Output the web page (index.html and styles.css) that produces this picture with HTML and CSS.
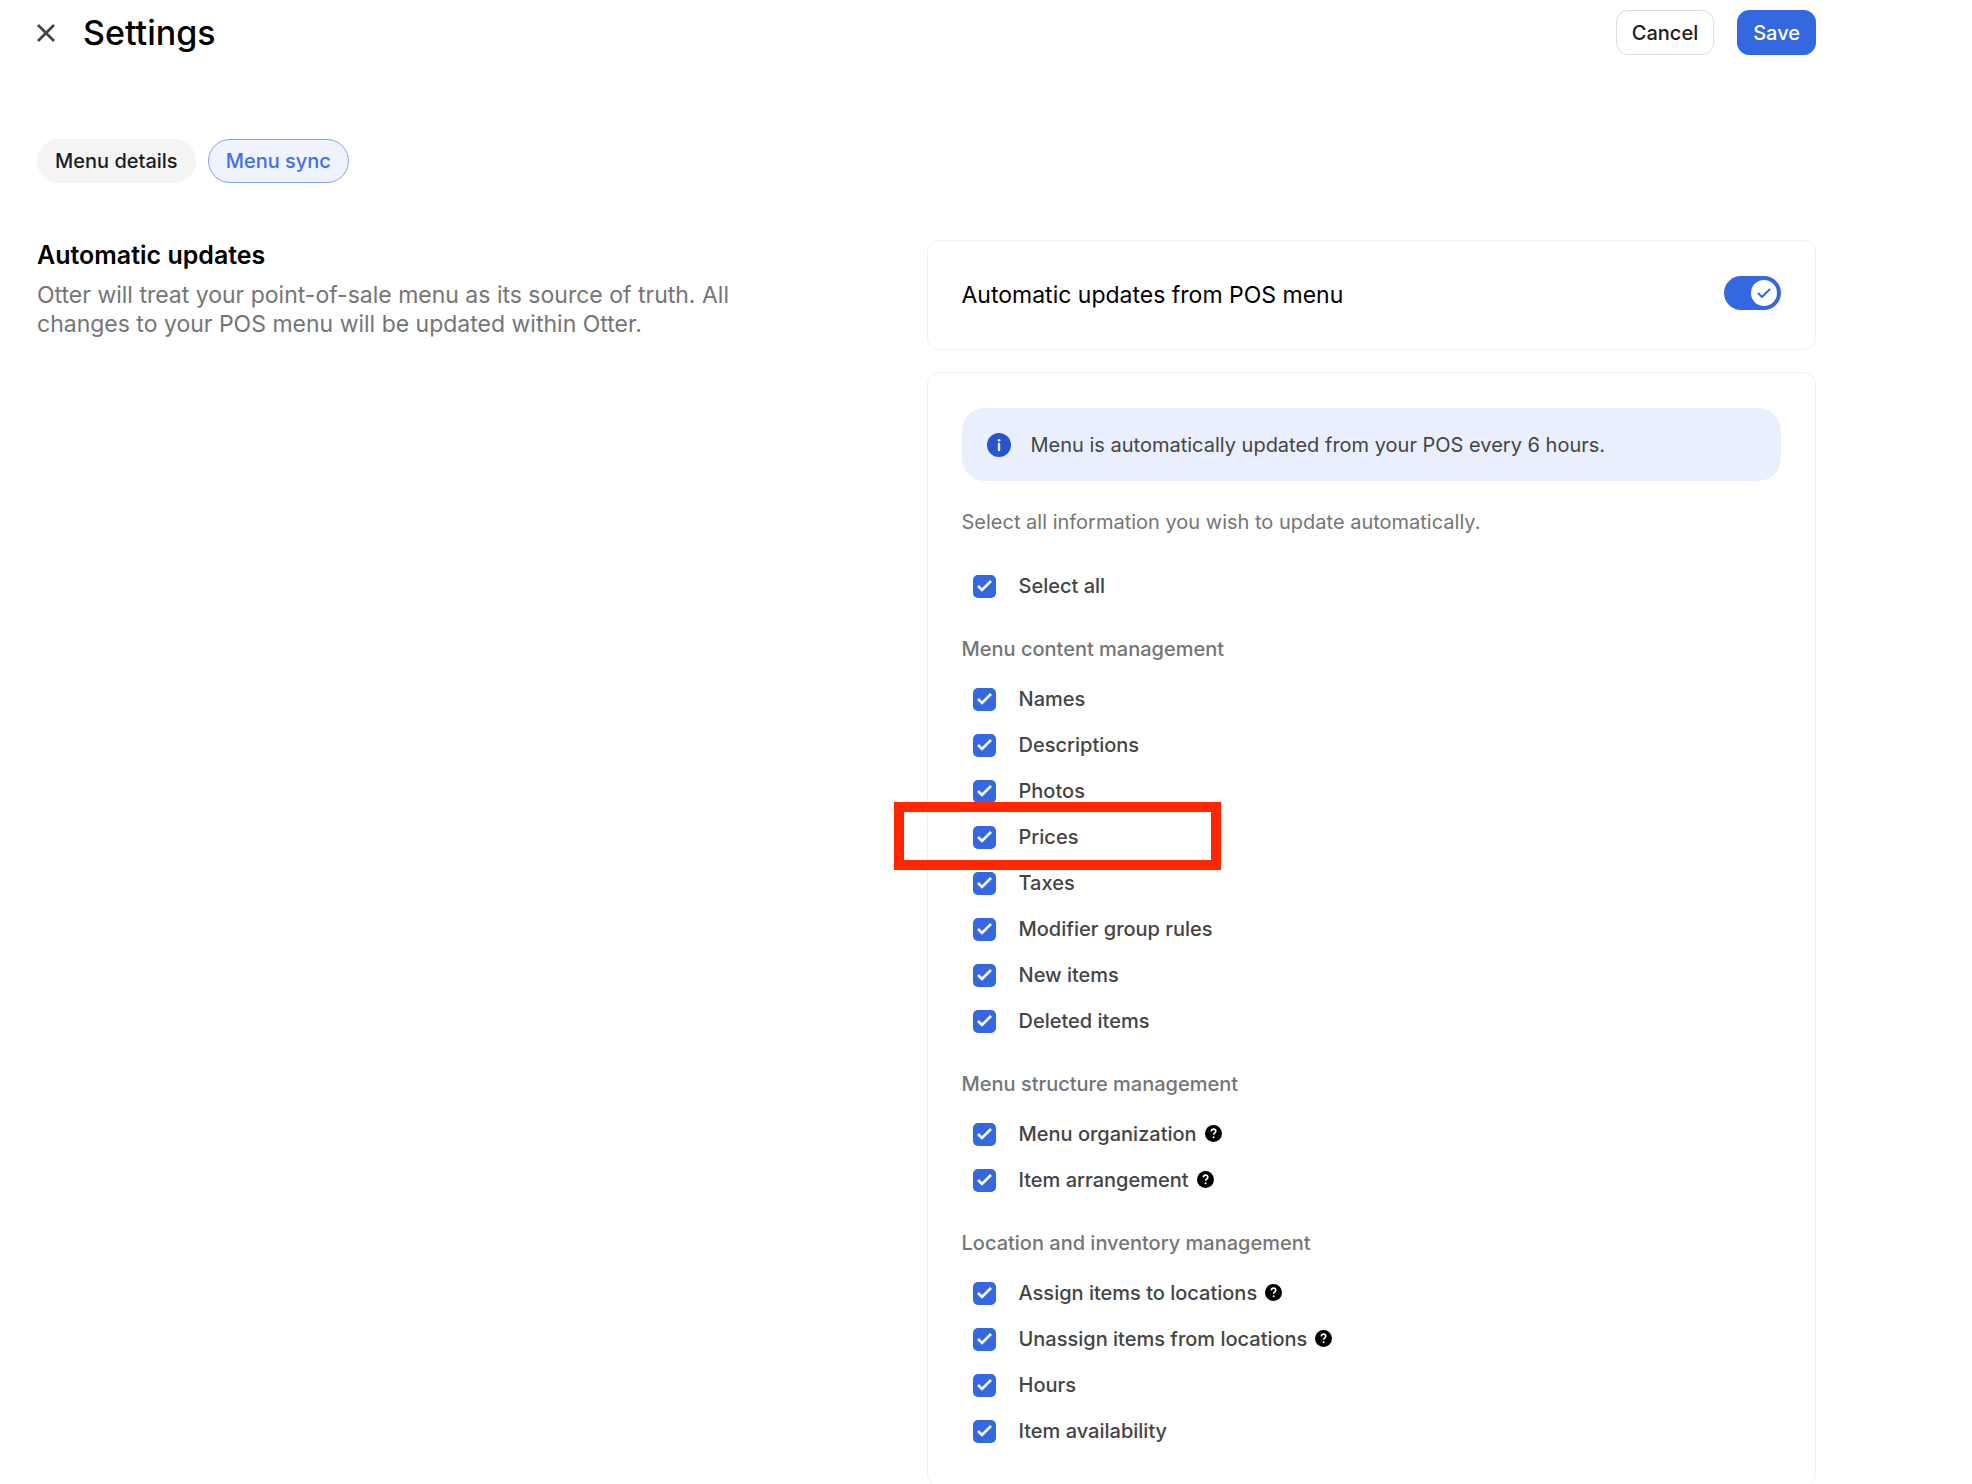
FILE: index.html
```html
<!DOCTYPE html>
<html lang="en">
  <head>
    <meta charset="utf-8" />
    <title>Settings</title>
    <meta name="viewport" content="width=device-width, initial-scale=1" />
    <link rel="stylesheet" href="styles.css">
  </head>

  <body>
    <svg class="symbols" aria-hidden="true">
      <symbol id="help" viewBox="0 0 17 17">
        <circle cx="8.5" cy="8.5" r="8.5" />
        <path d="M6.2 6.3C6.4 4.8 7.300 4.100 8.500 4.100s2.300.7 2.300 2.100c0 1.600-2.200 1.700-2.200 3.500" fill="none" stroke="#fff" stroke-width="1.6" />
        <circle cx="8.6" cy="12.2" r="1" fill="#fff" />
      </symbol>
    </svg>

    <header class="topbar">
      <button type="button" class="close-btn" aria-label="Close">
        <svg width="18" height="18" viewBox="0 0 18 18">
          <path d="M1 1l16 16M17 1L1 17" stroke="#444" stroke-width="2.8" />
        </svg>
      </button>
      <h1>Settings</h1>
      <div class="actions">
        <button type="button" class="btn">Cancel</button>
        <button type="submit" class="btn btn-primary" form="sync-form">Save</button>
      </div>
    </header>

    <nav class="tabs">
      <a href="#details" class="tab">Menu details</a>
      <a href="#sync" class="tab tab-active" aria-current="page">Menu sync</a>
    </nav>

    <main class="content">
      <section class="intro">
        <h2>Automatic updates</h2>
        <p>Otter will treat your point-of-sale menu as its source of truth. All changes to your POS menu will be updated within Otter.</p>
      </section>

      <form id="sync-form" class="panels">
        <div class="card toggle-card">
          <label for="auto-updates">Automatic updates from POS menu</label>
          <span class="switch">
            <input type="checkbox" role="switch" id="auto-updates" checked />
            <span class="knob">
              <svg width="14" height="10" viewBox="0 0 14 10">
                <path d="M1 5l4 4 8-8" fill="none" stroke="#3568e0" stroke-width="2" />
              </svg>
            </span>
          </span>
        </div>

        <div class="card">
          <div class="banner">
            <svg width="24" height="24" viewBox="0 0 24 24">
              <circle cx="12" cy="12" r="12" fill="#2855cc" />
              <circle cx="12" cy="7.3" r="1.4" fill="#e9effc" />
              <path d="M12 11v6" stroke="#e9effc" stroke-width="2.4" stroke-linecap="round" />
            </svg>
            <p>Menu is automatically updated from your POS every 6 hours.</p>
          </div>

          <p class="hint">Select all information you wish to update automatically.</p>

          <label class="row"><input type="checkbox" checked />Select all</label>

          <h3>Menu content management</h3>
          <label class="row"><input type="checkbox" checked />Names</label>
          <label class="row"><input type="checkbox" checked />Descriptions</label>
          <label class="row"><input type="checkbox" checked />Photos</label>
          <label class="row highlight"><input type="checkbox" checked />Prices</label>
          <label class="row"><input type="checkbox" checked />Taxes</label>
          <label class="row"><input type="checkbox" checked />Modifier group rules</label>
          <label class="row"><input type="checkbox" checked />New items</label>
          <label class="row"><input type="checkbox" checked />Deleted items</label>

          <h3>Menu structure management</h3>
          <label class="row"><input type="checkbox" checked />Menu organization <svg class="help"><use href="#help" /></svg></label>
          <label class="row"><input type="checkbox" checked />Item arrangement <svg class="help"><use href="#help" /></svg></label>

          <h3>Location and inventory management</h3>
          <label class="row"><input type="checkbox" checked />Assign items to locations <svg class="help"><use href="#help" /></svg></label>
          <label class="row"><input type="checkbox" checked />Unassign items from locations <svg class="help"><use href="#help" /></svg></label>
          <label class="row"><input type="checkbox" checked />Hours</label>
          <label class="row"><input type="checkbox" checked />Item availability</label>
        </div>
      </form>
    </main>
  </body>
</html>
```

FILE: styles.css
```css
* {
  margin: 0;
  padding: 0;
  box-sizing: border-box;
}

body {
  font-family: Inter, sans-serif;
  font-size: 20px;
  line-height: 28px;
  color: #000;
  background-color: #fff;
  padding: 10px 156px 0 37px;
}

button {
  font: inherit;
  cursor: pointer;
}

.symbols {
  display: none;
}

.topbar {
  display: flex;
  align-items: center;
  height: 45px;
}

.close-btn {
  display: flex;
  border: none;
  background: none;
}

h1 {
  margin-left: 28px;
  font-size: 34px;
  font-weight: 500;
  line-height: 45px;
}

.actions {
  display: flex;
  gap: 23px;
  margin-left: auto;
}

.btn {
  height: 45px;
  padding: 0 15px;
  border: 1px solid #dedede;
  border-radius: 12px;
  background-color: #fff;
  color: #1c1c1c;
  font-weight: 500;
}

.btn-primary {
  border-color: #3568e0;
  background-color: #3568e0;
  color: #fff;
}

.tabs {
  display: flex;
  gap: 12px;
  margin-top: 84px;
}

.tab {
  padding: 7px 17px;
  border: 1px solid #f4f4f4;
  border-radius: 22px;
  background-color: #f4f4f4;
  color: #1c1c1c;
  font-weight: 500;
  text-decoration: none;
}

.tab-active {
  border-color: #86a7ee;
  background-color: #eef3fe;
  color: #3f70e6;
}

.content {
  display: grid;
  grid-template-columns: 1fr 1fr;
  margin-top: 57px;
}

.intro {
  padding-right: 160px;
}

.intro h2 {
  font-size: 25px;
  font-weight: 600;
  line-height: 30px;
}

.intro p {
  margin-top: 11px;
  font-size: 23px;
  line-height: 29px;
  color: #757575;
}

.card {
  padding: 35px 34px 31px;
  border: 1px solid #f0f0f0;
  border-radius: 12px;
}

.card + .card {
  margin-top: 22px;
}

.toggle-card {
  display: flex;
  justify-content: space-between;
  padding-bottom: 35px;
  font-size: 23px;
  line-height: 38px;
}

/* the knob lies over the native checkbox */
.switch {
  position: relative;
  width: 57px;
  height: 34px;
}

.switch input {
  display: block;
  appearance: none;
  width: 57px;
  height: 34px;
  border-radius: 17px;
  background-color: #3568e0;
}

.knob {
  position: absolute;
  top: 4px;
  right: 4px;
  display: flex;
  align-items: center;
  justify-content: center;
  width: 26px;
  height: 26px;
  border-radius: 50%;
  background-color: #fff;
  pointer-events: none;
}

.banner {
  display: flex;
  align-items: center;
  gap: 20px;
  height: 73px;
  padding: 0 25px;
  border-radius: 23px;
  background-color: #e9effc;
  color: #444;
}

.hint {
  margin: 27px 0;
  color: #757575;
}

h3 {
  margin: 26px 0 13px;
  font-size: 20px;
  font-weight: 500;
  color: #757575;
}

.row {
  display: flex;
  align-items: center;
  height: 46px;
  padding-left: 11px;
  font-weight: 500;
  color: #444;
}

.row input {
  appearance: none;
  width: 23px;
  height: 23px;
  margin-right: 23px;
  border-radius: 5px;
  background: #3568e0 url("data:image/svg+xml,%3Csvg xmlns='http://www.w3.org/2000/svg' viewBox='0 0 23 23'%3E%3Cpath d='M5 11l4 4 9-9' fill='none' stroke='%23fff' stroke-width='2.6'/%3E%3C/svg%3E");
}

.help {
  width: 17px;
  height: 17px;
  margin: 0 0 2px 8px;
}

.highlight {
  position: relative;
}

.highlight::after {
  content: "";
  position: absolute;
  top: -12px;
  left: -68px;
  box-sizing: border-box;
  width: 327px;
  height: 68px;
  border: 10px solid #ff2600;
}
```
